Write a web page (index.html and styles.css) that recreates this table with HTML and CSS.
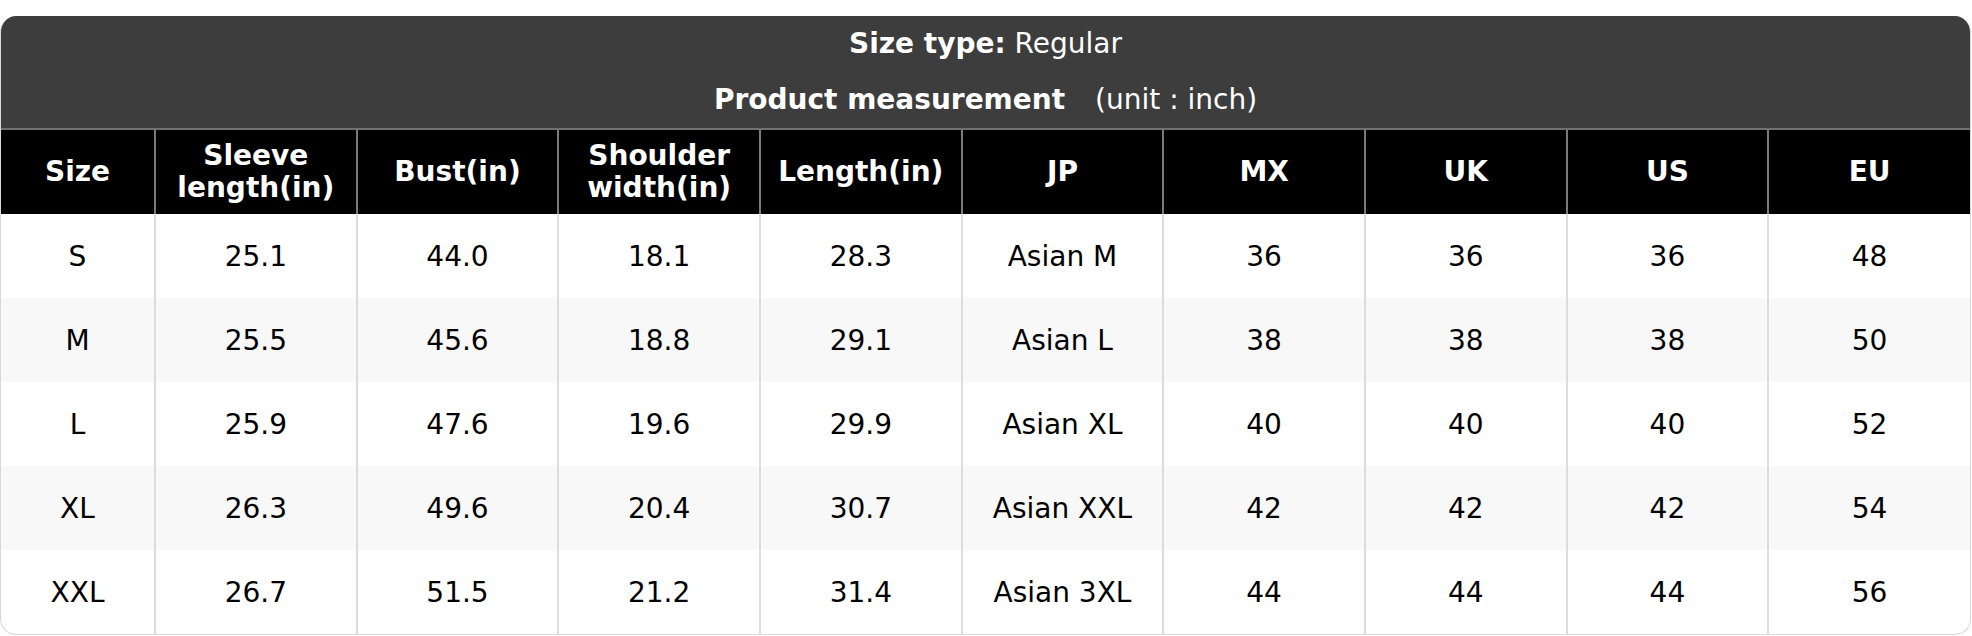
FILE: index.html
```html
<!DOCTYPE html>
<html lang="en">
<head>
<meta charset="utf-8">
<title>Size chart</title>
<link rel="stylesheet" href="styles.css">
</head>
<body>
<div class="card">
  <div class="title">
    <div class="title-line"><b>Size type:</b> Regular</div>
    <div class="title-line"><b>Product measurement</b><span class="unit">(unit : inch)</span></div>
  </div>
  <table class="chart">
    <colgroup>
      <col class="col-size">
      <col><col><col><col><col><col><col><col><col>
    </colgroup>
    <thead>
      <tr>
        <th>Size</th>
        <th>Sleeve<br>length(in)</th>
        <th>Bust(in)</th>
        <th>Shoulder<br>width(in)</th>
        <th>Length(in)</th>
        <th>JP</th>
        <th>MX</th>
        <th>UK</th>
        <th>US</th>
        <th>EU</th>
      </tr>
    </thead>
    <tbody>
      <tr><td>S</td><td>25.1</td><td>44.0</td><td>18.1</td><td>28.3</td><td>Asian M</td><td>36</td><td>36</td><td>36</td><td>48</td></tr>
      <tr><td>M</td><td>25.5</td><td>45.6</td><td>18.8</td><td>29.1</td><td>Asian L</td><td>38</td><td>38</td><td>38</td><td>50</td></tr>
      <tr><td>L</td><td>25.9</td><td>47.6</td><td>19.6</td><td>29.9</td><td>Asian XL</td><td>40</td><td>40</td><td>40</td><td>52</td></tr>
      <tr><td>XL</td><td>26.3</td><td>49.6</td><td>20.4</td><td>30.7</td><td>Asian XXL</td><td>42</td><td>42</td><td>42</td><td>54</td></tr>
      <tr><td>XXL</td><td>26.7</td><td>51.5</td><td>21.2</td><td>31.4</td><td>Asian 3XL</td><td>44</td><td>44</td><td>44</td><td>56</td></tr>
    </tbody>
  </table>
</div>
</body>
</html>
```

FILE: styles.css
```css
html, body {
  margin: 0;
  padding: 0;
  background: #ffffff;
}

body {
  font-family: "DejaVu Sans", "Liberation Sans", sans-serif;
  font-size: 28px;
  color: #000000;
}

.card {
  margin: 16px 1px 0 0;
  border: 1px solid #d8d8d8;
  border-top: none;
  border-radius: 16px;
  overflow: hidden;
  background: #ffffff;
}

.title {
  background: #3d3d3d;
  color: #ffffff;
  text-align: center;
  border-bottom: 2px solid #707070;
}

.title-line {
  height: 56px;
  line-height: 56px;
}

.title-line b {
  font-weight: bold;
}

.unit {
  margin-left: 30px;
}

.chart {
  width: 100%;
  border-collapse: collapse;
  table-layout: fixed;
}

.col-size {
  width: 154px;
}

.chart th {
  background: #000000;
  color: #ffffff;
  font-weight: bold;
  line-height: 32px;
  height: 84px;
  padding: 0;
  border-left: 2px solid #7a7a7a;
  border-right: 2px solid #7a7a7a;
  text-align: center;
  vertical-align: middle;
}

.chart td {
  height: 84px;
  padding: 0;
  text-align: center;
  vertical-align: middle;
  border-left: 2px solid #dddddd;
  border-right: 2px solid #dddddd;
}

.chart th:first-child,
.chart td:first-child {
  border-left: none;
}

.chart th:last-child,
.chart td:last-child {
  border-right: none;
}

.chart tbody tr:nth-child(even) td {
  background: #f8f8f8;
}
```
